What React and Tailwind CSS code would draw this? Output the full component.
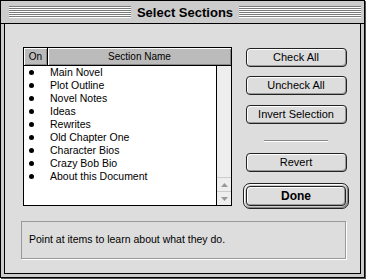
export default function App() {
  const items = [
    "Main Novel",
    "Plot Outline",
    "Novel Notes",
    "Ideas",
    "Rewrites",
    "Old Chapter One",
    "Character Bios",
    "Crazy Bob Bio",
    "About this Document",
  ];
  const stripes =
    "flex-1 h-[12px] bg-[repeating-linear-gradient(to_bottom,#7a7a7a_0px,#7a7a7a_1px,#ffffff_1px,#ffffff_2px)]";
  const btn =
    "w-[101px] h-[19px] rounded-[4px] border border-[#222] bg-[#dddddd] shadow-[inset_1px_1px_0_#ffffff,inset_-1px_-1px_0_#999999] flex items-center justify-center text-[11px] leading-none";
  return (
    <div className="w-[369px] h-[280px] bg-white font-['Liberation_Sans',Arial,sans-serif] text-black overflow-hidden">
      <div className="w-[365px] h-[278px] border border-black bg-[#cccccc] flex flex-col shadow-[1px_1px_0_#555555]">
        <div className="h-[23px] shrink-0 flex items-center pl-[8px] pr-[3px] gap-[6px] border-b border-black bg-[#cccccc]">
          <div className={stripes} />
          <span className="text-[13px] font-bold leading-none">Select Sections</span>
          <div className={stripes} />
        </div>
        <div className="flex-1 px-[3px] pb-[3px] flex flex-col">
          <div className="flex-1 border border-t-0 border-black bg-[#dddddd] flex flex-col">
            <div className="flex pl-[18px] pt-[23px]">
              <div className="w-[209px] h-[159px] border border-black flex flex-col bg-white">
                <div className="h-[18px] shrink-0 flex border-b border-black bg-[#bbbbbb] text-[10px] leading-none">
                  <div className="w-[24px] flex items-center justify-center border-r border-black shadow-[inset_1px_1px_0_#ffffff,inset_-1px_-1px_0_#888888]">
                    On
                  </div>
                  <div className="flex-1 flex items-center justify-center shadow-[inset_1px_1px_0_#ffffff,inset_-1px_-1px_0_#888888]">
                    Section Name
                  </div>
                </div>
                <div className="flex-1 flex">
                  <div className="flex-1 flex flex-col text-[10.5px] leading-[13px]">
                    {items.map((t) => (
                      <div key={t} className="h-[13px] flex items-center">
                        <span className="w-[26px] flex pl-[5px]">
                          <span className="w-[5px] h-[5px] rounded-full bg-black" />
                        </span>
                        <span>{t}</span>
                      </div>
                    ))}
                  </div>
                  <div className="w-[15px] border-l border-black bg-[#eeeeee] flex flex-col justify-end">
                    <div className="h-[14px] border-t border-[#cccccc] flex items-center justify-center">
                      <svg width="7" height="4" viewBox="0 0 7 4">
                        <polygon points="3.5,0 7,4 0,4" fill="#999999" />
                      </svg>
                    </div>
                    <div className="h-[14px] border-t border-[#cccccc] flex items-center justify-center">
                      <svg width="7" height="4" viewBox="0 0 7 4">
                        <polygon points="0,0 7,0 3.5,4" fill="#999999" />
                      </svg>
                    </div>
                  </div>
                </div>
              </div>
              <div className="ml-[11px] w-[106px] flex flex-col items-center pt-[1px]">
                <div className={btn}>Check All</div>
                <div className={btn + " mt-[9px]"}>Uncheck All</div>
                <div className={btn + " mt-[10px]"}>Invert Selection</div>
                <div className="mt-[16px] w-[64px] h-[2px] border-t border-[#888888] border-b border-b-white" />
                <div className={btn + " mt-[11px]"}>Revert</div>
                <div className="mt-[11px] w-[106px] h-[26px] rounded-[7px] border border-[#222] bg-[#cccccc] shadow-[inset_1px_1px_0_#ffffff,inset_-1px_-1px_0_#888888] flex items-center justify-center">
                  <div className="w-[100px] h-[20px] rounded-[4px] border border-[#222] bg-[#dddddd] shadow-[inset_1px_1px_0_#ffffff,inset_-1px_-1px_0_#999999] flex items-center justify-center text-[12px] font-bold leading-none">
                    Done
                  </div>
                </div>
              </div>
            </div>
            <div className="ml-[16px] mt-[12px] w-[325px] h-[38px] border border-[#999999] shadow-[1px_1px_0_#ffffff] flex items-center pl-[7px] pb-[2px] text-[10.5px] leading-none">
              Point at items to learn about what they do.
            </div>
          </div>
        </div>
      </div>
    </div>
  );
}
